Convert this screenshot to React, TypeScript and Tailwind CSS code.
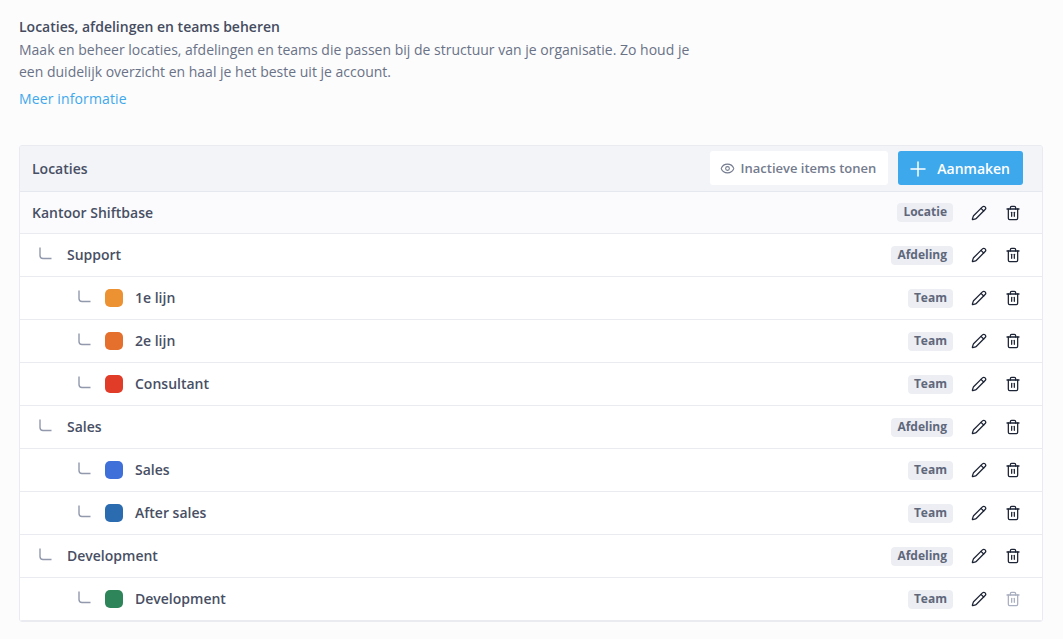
import { Eye, Pencil, Plus, Trash2 } from "lucide-react"

type Row = {
  name: string
  type: "Locatie" | "Afdeling" | "Team"
  color?: string
  locked?: boolean
}

const ROWS: Row[] = [
  { name: "Kantoor Shiftbase", type: "Locatie" },
  { name: "Support", type: "Afdeling" },
  { name: "1e lijn", type: "Team", color: "bg-[#ec9233]" },
  { name: "2e lijn", type: "Team", color: "bg-[#e56f2c]" },
  { name: "Consultant", type: "Team", color: "bg-[#e03c28]" },
  { name: "Sales", type: "Afdeling" },
  { name: "Sales", type: "Team", color: "bg-[#3f6fd8]" },
  { name: "After sales", type: "Team", color: "bg-[#2b6cb0]" },
  { name: "Development", type: "Afdeling" },
  { name: "Development", type: "Team", color: "bg-[#2f855a]", locked: true },
]

function Elbow() {
  return (
    <svg width="13" height="13" viewBox="0 0 13 13" fill="none" className="mb-[4px] shrink-0">
      <path d="M1 0.5V8.5C1 10.5 2 11.5 4 11.5H12.5" stroke="#9299ad" strokeWidth="1.4" />
    </svg>
  )
}

function TreeRow({ row }: { row: Row }) {
  const isLocation = row.type === "Locatie"
  const isDepartment = row.type === "Afdeling"
  const label = "text-sm font-semibold text-[#484f64]"
  return (
    <div
      className={`flex items-center border-b border-[#e9ebf1] pr-[21px] ${isLocation ? "h-[42px] bg-[#fbfbfd]" : "h-[43px] bg-white"}`}
    >
      {isLocation && <span className={`pl-3 ${label}`}>{row.name}</span>}
      {isDepartment && (
        <div className="flex items-center pl-[19px]">
          <Elbow />
          <span className={`ml-[15px] ${label}`}>{row.name}</span>
        </div>
      )}
      {row.type === "Team" && (
        <div className="flex items-center pl-[58px]">
          <Elbow />
          <span className={`ml-[14px] h-[18px] w-[18px] rounded-[5px] ${row.color}`} />
          <span className={`ml-3 ${label}`}>{row.name}</span>
        </div>
      )}
      <div className="ml-auto flex items-center">
        <span className="rounded-[4px] bg-[#eceef3] px-[6px] pb-[2px] text-xs leading-[17px] font-bold text-[#5f677b]">
          {row.type}
        </span>
        <Pencil size={16} strokeWidth={1.9} className="ml-[18px] text-[#1d2435]" />
        <Trash2
          size={16}
          strokeWidth={1.9}
          className={`ml-[18px] ${row.locked ? "text-[#a9afc0]" : "text-[#1d2435]"}`}
        />
      </div>
    </div>
  )
}

export default function App() {
  return (
    <div className="h-[639px] overflow-hidden bg-[#fcfcfd] pt-[17px] pr-[20px] pl-[19px] font-['Open_Sans',sans-serif]">
      <h2 className="text-sm leading-5 font-semibold text-[#454c60]">Locaties, afdelingen en teams beheren</h2>
      <p className="mt-[2px] w-[690px] text-sm leading-[22px] text-[#6a7286]">
        Maak en beheer locaties, afdelingen en teams die passen bij de structuur van je organisatie. Zo houd je een
        duidelijk overzicht en haal je het beste uit je account.
      </p>
      <a className="mt-[5px] block text-sm leading-[22px] font-medium tracking-[0.13px] text-[#3ea8ec]">
        Meer informatie
      </a>

      <div className="mt-[35px] overflow-hidden rounded-[3px] border border-[#e9ebf1]">
        <div className="flex h-[46px] items-center border-b border-[#e6e8ef] bg-[#f2f4f8] pr-[19px] pl-3">
          <span className="text-sm font-semibold text-[#484f64]">Locaties</span>
          <button className="mb-px ml-auto flex h-[34px] items-center gap-[6px] rounded-[3px] bg-white pt-px pr-[12px] pl-[10px] text-[13px] font-semibold text-[#747b8e]">
            <Eye size={15} strokeWidth={1.7} />
            Inactieve items tonen
          </button>
          <button className="mb-px ml-[10px] flex h-[34px] items-center gap-[7px] rounded-[3px] bg-[#3ea8ec] pt-px pr-[13px] pl-[8px] text-sm font-semibold text-white">
            <Plus size={24} strokeWidth={1.5} />
            Aanmaken
          </button>
        </div>
        {ROWS.map((row) => (
          <TreeRow key={`${row.type}-${row.name}`} row={row} />
        ))}
      </div>
    </div>
  )
}
